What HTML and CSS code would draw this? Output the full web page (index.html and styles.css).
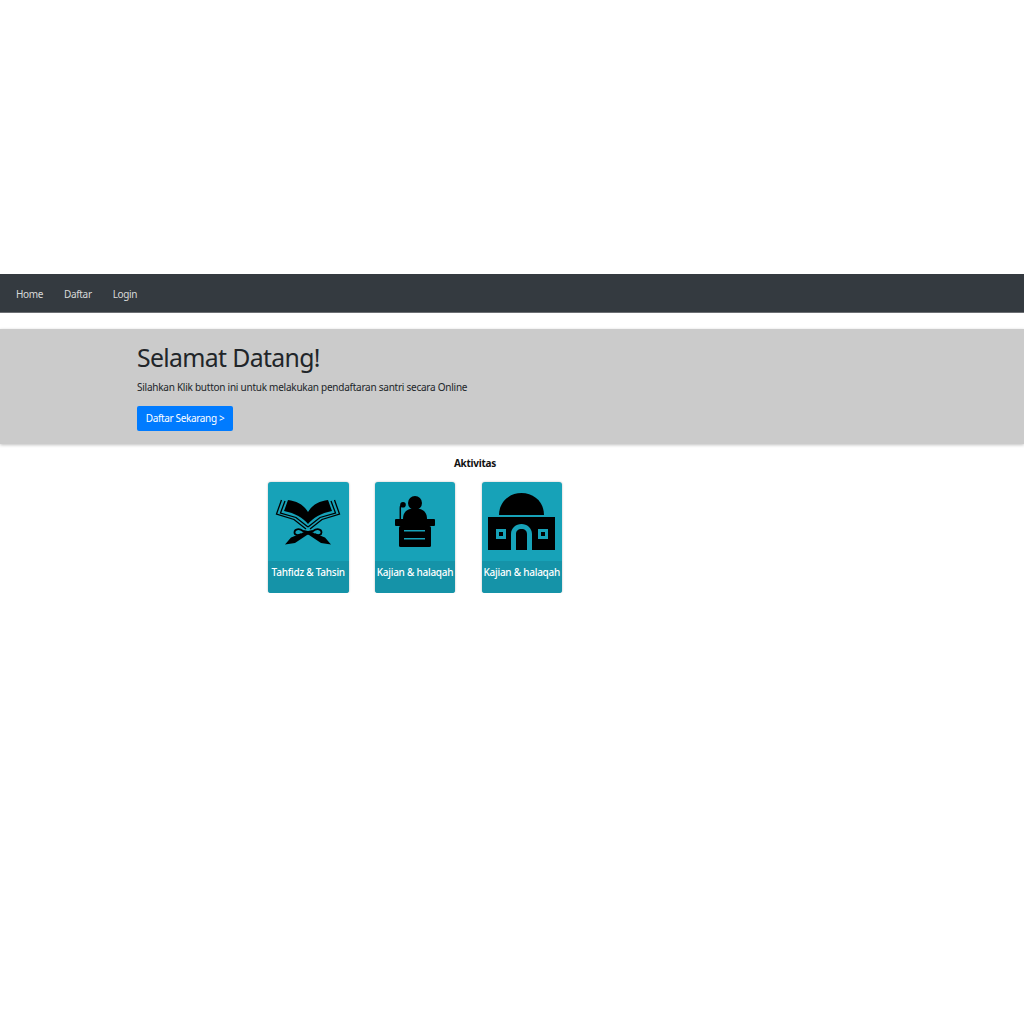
FILE: index.html
```html
<!DOCTYPE html>
<html>
    <head>
        <title>Selamat Datang</title>
        <link rel="stylesheet" href="styles.css">
    </head>
    <body>
        <nav class="navbar">
            <a href="#">Home</a>
            <a href="#">Daftar</a>
            <a href="#">Login</a>
        </nav>
        <div class="jumbotron">
            <h1>Selamat Datang!</h1>
            <p>Silahkan Klik button ini untuk melakukan pendaftaran santri secara Online</p>
            <a class="btn" href="#">Daftar Sekarang &gt;</a>
        </div>
        <div class="content">
            <h6>Aktivitas</h6>
            <div class="cards">
                <div class="card">
                    <div class="card-icon">
                        <svg width="72" height="50" viewBox="0 0 72 50">
                            <defs>
                                <g id="half">
                                    <path d="M16 3C25 4 32 8 36 15V27C31 21 23 16 12 14Z"/>
                                    <path d="M13 4L8.500 16L24 20.500L36 30" fill="none" stroke="#000" stroke-width="1.300"/>
                                    <path d="M9.500 3L4.500 17L22 22.500L34 32" fill="none" stroke="#000" stroke-width="1.300"/>
                                    <path d="M59 47.500L49 46L37 38L30 35L31.500 33L38 34.500L53 40.500Z"/>
                                    <path d="M31 34C27 31 22.500 32 22.500 35.500C22.500 38 26 39 29 37" fill="none" stroke="#000" stroke-width="1.800"/>
                                </g>
                            </defs>
                            <use href="#half"/>
                            <use href="#half" transform="matrix(-1 0 0 1 72 0)"/>
                        </svg>
                    </div>
                    <div class="card-title">Tahfidz &amp; Tahsin</div>
                </div>
                <div class="card">
                    <div class="card-icon">
                        <svg width="40" height="51" viewBox="0 0 40 51">
                            <circle cx="20" cy="7" r="7"/>
                            <path d="M8 23C8 17 11 14 15 13L25 13C29 14 32 17 32 23Z"/>
                            <path d="M5.300 23V12C5.300 10 6 9 8 9" fill="none" stroke="#000" stroke-width="1.500"/>
                            <circle cx="8" cy="8.700" r="2.800"/>
                            <rect y="23" width="40" height="7" rx="1"/>
                            <rect x="4" y="30" width="32" height="21" rx="1.500"/>
                            <rect x="9" y="34" width="21" height="1.500" class="cutout"/>
                            <rect x="9" y="42" width="21" height="1.500" class="cutout"/>
                        </svg>
                    </div>
                    <div class="card-title">Kajian &amp; halaqah</div>
                </div>
                <div class="card">
                    <div class="card-icon">
                        <svg width="67" height="57" viewBox="0 0 67 57">
                            <path d="M11 22C11 9 21 0 33.500 0C46 0 56 9 56 22Z"/>
                            <rect y="24" width="67" height="33"/>
                            <path d="M23 57V41C23 35 28 31 33.500 31C39 31 44 35 44 41V57H39V41C39 38 37 36 33.500 36C30 36 28 38 28 41V57Z" class="cutout"/>
                            <path d="M8 36H18V46H8ZM11 39V43H15V39Z" class="cutout" fill-rule="evenodd"/>
                            <path d="M50 36H60V46H50ZM53 39V43H57V39Z" class="cutout" fill-rule="evenodd"/>
                        </svg>
                    </div>
                    <div class="card-title">Kajian &amp; halaqah</div>
                </div>
            </div>
        </div>
    </body>
</html>
```

FILE: styles.css
```css
body {
    margin: 0px;
    padding-top: 274px;
    background: #fff;
    color: #212529;
    font-family: "Noto Sans", "Open Sans", sans-serif;
    font-size: 10px;
    letter-spacing: -0.25px;
}

.navbar {
    height: 39px;
    background: #343a40;
    border-bottom: 1px solid #6c6f73;
    box-sizing: border-box;
    display: flex;
    align-items: center;
    gap: 21px;
    padding: 1px 0px 0px 16px;
    letter-spacing: -0.35px;
}

.navbar a {
    color: #d8d9da;
    text-decoration: none;
}

.jumbotron {
    margin-top: 16px;
    height: 115px;
    box-sizing: border-box;
    padding: 13px 0px 0px 137px;
    background: #cbcbcb;
    box-shadow: 0 1px 3px rgba(0, 0, 0, 0.25);
}

.jumbotron h1 {
    margin: 0px;
    font-size: 24.8px;
    font-weight: 400;
    line-height: 30px;
    letter-spacing: -0.65px;
}

.jumbotron p {
    margin: 8px 0px 12px;
    line-height: 14px;
}

.btn {
    display: inline-block;
    width: 96px;
    height: 25px;
    line-height: 25px;
    text-align: center;
    color: #fff;
    background: #007bff;
    border-radius: 2px;
    text-decoration: none;
    letter-spacing: -0.35px;
}

.content {
    width: 676px;
    margin-left: 137px;
}

.content h6 {
    margin: 12px 0px 12px;
    font-size: 10px;
    line-height: 14px;
    font-weight: 700;
    text-align: center;
    color: #111;
}

.cards {
    display: flex;
    gap: 26.25px;
    padding-left: 131px;
}

.card {
    width: 80.5px;
    height: 111px;
    background: #17a2b8;
    border-radius: 3px;
    box-shadow: 0 0 2px rgba(0, 0, 0, 0.3);
    display: flex;
    flex-direction: column;
    overflow: hidden;
}

.card-icon {
    height: 79px;
    display: flex;
    align-items: center;
    justify-content: center;
}

.card-title {
    flex: 1;
    background: #1593a8;
    color: #fff;
    text-align: center;
    white-space: nowrap;
    line-height: 22px;
    font-weight: 500;
}

.cutout {
    fill: #17a2b8;
}
```
